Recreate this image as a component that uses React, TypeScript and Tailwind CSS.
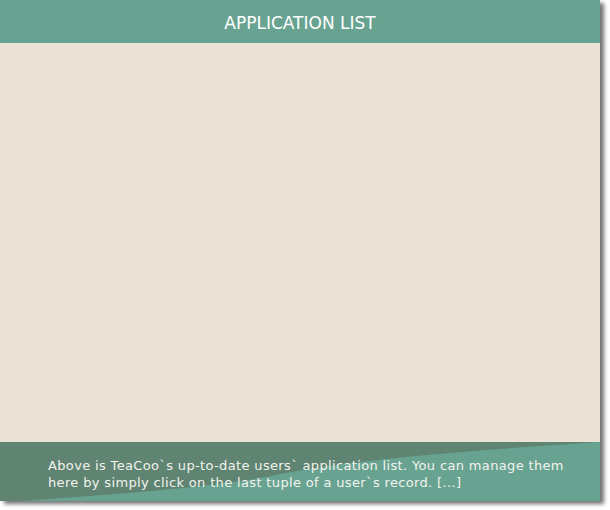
import React from "react";

export default function App() {
  return (
    <div className="w-[610px] h-[510px] bg-white">
      <div className="flex h-[501px] w-[600px] flex-col shadow-[4px_3px_4px_rgba(0,0,0,0.55)]">
        <div className="flex h-[43px] items-center justify-center bg-[#68a391] pt-[4px] text-[17px] text-white" style={{ fontFamily: '"DejaVu Sans", sans-serif' }}>
          APPLICATION LIST
        </div>
        <div className="flex-1 bg-[#ebe4d6]" />
        <div className="relative h-[59px] bg-[#5f8472]">
          <svg className="absolute inset-0" width="600" height="59" viewBox="0 0 600 59">
            <path d="M20 59 C120 52 200 46 260 36 C330 22 400 13 600 0 L600 59 Z" fill="#68a391" />
          </svg>
          <div
            className="relative pl-[48px] pt-[15px] text-[13px] leading-[17px] tracking-[0.35px] text-[#f3f3ee]"
            style={{ fontFamily: '"DejaVu Sans", sans-serif' }}
          >
            Above is TeaCoo`s up-to-date users` application list. You can manage them
            <br />
            here by simply click on the last tuple of a user`s record. [...]
          </div>
        </div>
      </div>
    </div>
  );
}
